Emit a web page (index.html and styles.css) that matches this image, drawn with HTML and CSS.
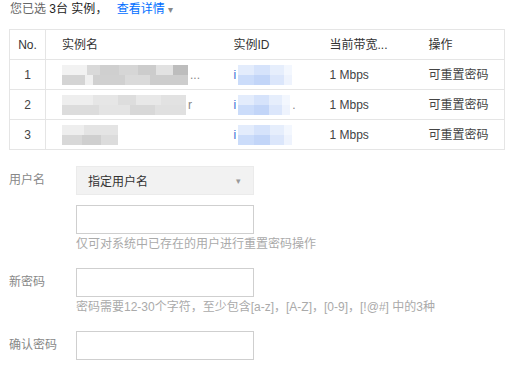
FILE: index.html
```html
<!DOCTYPE html>
<html lang="zh-CN">
<head>
    <meta charset="UTF-8">
    <title>重置密码</title>
    <link rel="stylesheet" href="styles.css">
</head>
<body>

    <div class="summary">
        <span class="muted">您已选</span> <span class="strong">3台 实例</span>，
        <a class="detail-link" href="#">查看详情 <span class="caret">&#9662;</span></a>
    </div>

    <table class="instances">
        <colgroup>
            <col class="c-no"><col class="c-name"><col class="c-id"><col class="c-bw"><col class="c-op">
        </colgroup>
        <thead>
            <tr>
                <th class="no">No.</th>
                <th>实例名</th>
                <th>实例ID</th>
                <th>当前带宽...</th>
                <th>操作</th>
            </tr>
        </thead>
        <tbody>
            <tr>
                <td class="no">1</td>
                <td><span class="mask mask-gray w1"></span><span class="tail">...</span></td>
                <td><span class="id-i">i</span><span class="mask mask-blue b1"></span></td>
                <td>1 Mbps</td>
                <td>可重置密码</td>
            </tr>
            <tr>
                <td class="no">2</td>
                <td><span class="mask mask-gray w2"></span><span class="tail">r</span></td>
                <td><span class="id-i">i</span><span class="mask mask-blue b2"></span><span class="tail">.</span></td>
                <td>1 Mbps</td>
                <td>可重置密码</td>
            </tr>
            <tr>
                <td class="no">3</td>
                <td><span class="mask mask-gray w3"></span></td>
                <td><span class="id-i">i</span><span class="mask mask-blue b1"></span></td>
                <td>1 Mbps</td>
                <td>可重置密码</td>
            </tr>
        </tbody>
    </table>

    <div class="form">
        <div class="form-row">
            <label class="form-label">用户名</label>
            <div class="form-field">
                <div class="select">
                    <span>指定用户名</span>
                    <span class="select-caret">&#9662;</span>
                </div>
                <input class="text-input spaced" type="text">
                <p class="hint">仅可对系统中已存在的用户进行重置密码操作</p>
            </div>
        </div>
        <div class="form-row">
            <label class="form-label">新密码</label>
            <div class="form-field">
                <input class="text-input" type="password">
                <p class="hint">密码需要12-30个字符，至少包含[a-z]，[A-Z]，[0-9]，[!@#] 中的3种</p>
            </div>
        </div>
        <div class="form-row">
            <label class="form-label">确认密码</label>
            <div class="form-field">
                <input class="text-input" type="password">
            </div>
        </div>
    </div>

</body>
</html>
```

FILE: styles.css
```css
body {
    margin: 0;
    padding: 0 9px;
    font-family: "Liberation Sans", "Noto Sans CJK SC", sans-serif;
    font-size: 12px;
    color: #333;
    background: #fff;
}
.summary {
    height: 16px;
    line-height: 16px;
    padding: 1px 0 0 1px;
    margin-bottom: 12px;
}
.muted {
    color: #666;
}
.strong {
    color: #222;
}
.detail-link {
    color: #006eff;
    text-decoration: none;
    margin-left: 6px;
}
.caret {
    color: #888;
    font-size: 10px;
}
.instances {
    width: 495px;
    border-collapse: collapse;
    table-layout: fixed;
    border: 1px solid #e5e5e5;
}
.c-no { width: 36px; }
.c-name { width: 172px; }
.c-id { width: 96px; }
.c-bw { width: 99px; }
.c-op { width: 92px; }
.instances tr {
    height: 30px;
}
.instances th,
.instances td {
    padding: 0 0 0 16px;
    line-height: 16px;
    text-align: left;
    font-weight: normal;
    border-bottom: 1px solid #e5e5e5;
    white-space: nowrap;
    vertical-align: middle;
}
.instances th {
    color: #333;
}
.instances td {
    color: #444;
}
.instances .no {
    padding: 0;
    text-align: center;
    border-right: 1px solid #e5e5e5;
}
.mask {
    display: inline-block;
    height: 20px;
    vertical-align: middle;
}
.mask-gray {
    background:
        linear-gradient(to right, #f2f2f2 0 20%, #d9d9d9 20% 30%, #cfcfcf 30% 45%, #d6d6d6 45% 60%, #cccccc 60% 75%, #e2e2e2 75% 88%, #bdbdbd 88% 100%) top / 100% 50% no-repeat,
        linear-gradient(to right, #d4d4d4 0 18%, #f0f0f0 18% 25%, #d0d0d0 25% 50%, #dadada 50% 70%, #cdcdcd 70% 100%) bottom / 100% 50% no-repeat;
}
.w1 { width: 126px; }
.w2 {
    width: 124px;
    background:
        linear-gradient(to right, #eeeeee 0 25%, #e6e6e6 25% 45%, #dddddd 45% 60%, #e8e8e8 60% 80%, #e2e2e2 80% 100%) top / 100% 50% no-repeat,
        linear-gradient(to right, #dcdcdc 0 30%, #e4e4e4 30% 55%, #d8d8d8 55% 75%, #e0e0e0 75% 100%) bottom / 100% 50% no-repeat;
}
.w3 {
    width: 56px;
    background:
        linear-gradient(to right, #eeeeee 0 40%, #e4e4e4 40% 100%) top / 100% 50% no-repeat,
        linear-gradient(to right, #d8d8d8 0 35%, #cfcfcf 35% 70%, #dcdcdc 70% 100%) bottom / 100% 50% no-repeat;
}
.mask-blue {
    margin-left: 2px;
    background:
        linear-gradient(to right, #e3ecfc 0 30%, #d6e3fb 30% 60%, #e6eefc 60% 85%, #f3f7fe 85% 100%) top / 100% 50% no-repeat,
        linear-gradient(to right, #cbdcfa 0 30%, #c2d5f8 30% 60%, #dbe6fb 60% 85%, #eef3fd 85% 100%) bottom / 100% 50% no-repeat;
}
.b1 { width: 54px; }
.b2 { width: 52px; }
.id-i {
    color: #3a6fd8;
    vertical-align: middle;
}
.tail {
    color: #888;
    margin-left: 2px;
    vertical-align: middle;
}
.form {
    margin-top: 16px;
}
.form-row {
    display: flex;
    margin-bottom: 15px;
}
.form-label {
    width: 67px;
    line-height: 29px;
    color: #888;
}
.form-field {
    width: 178px;
}
.select {
    display: flex;
    justify-content: space-between;
    align-items: center;
    box-sizing: border-box;
    height: 29px;
    padding: 0 12px 0 11px;
    background: #f2f2f2;
    border: 1px solid #ebebeb;
    color: #333;
}
.select-caret {
    color: #999;
    font-size: 9px;
}
.text-input {
    display: block;
    box-sizing: border-box;
    width: 178px;
    height: 29px;
    margin: 0;
    border: 1px solid #cfcfcf;
    background: #fff;
    font: inherit;
}
.text-input.spaced {
    margin-top: 10px;
}
.hint {
    margin: 2px 0 0;
    line-height: 17px;
    color: #aaa;
    white-space: nowrap;
}
```
